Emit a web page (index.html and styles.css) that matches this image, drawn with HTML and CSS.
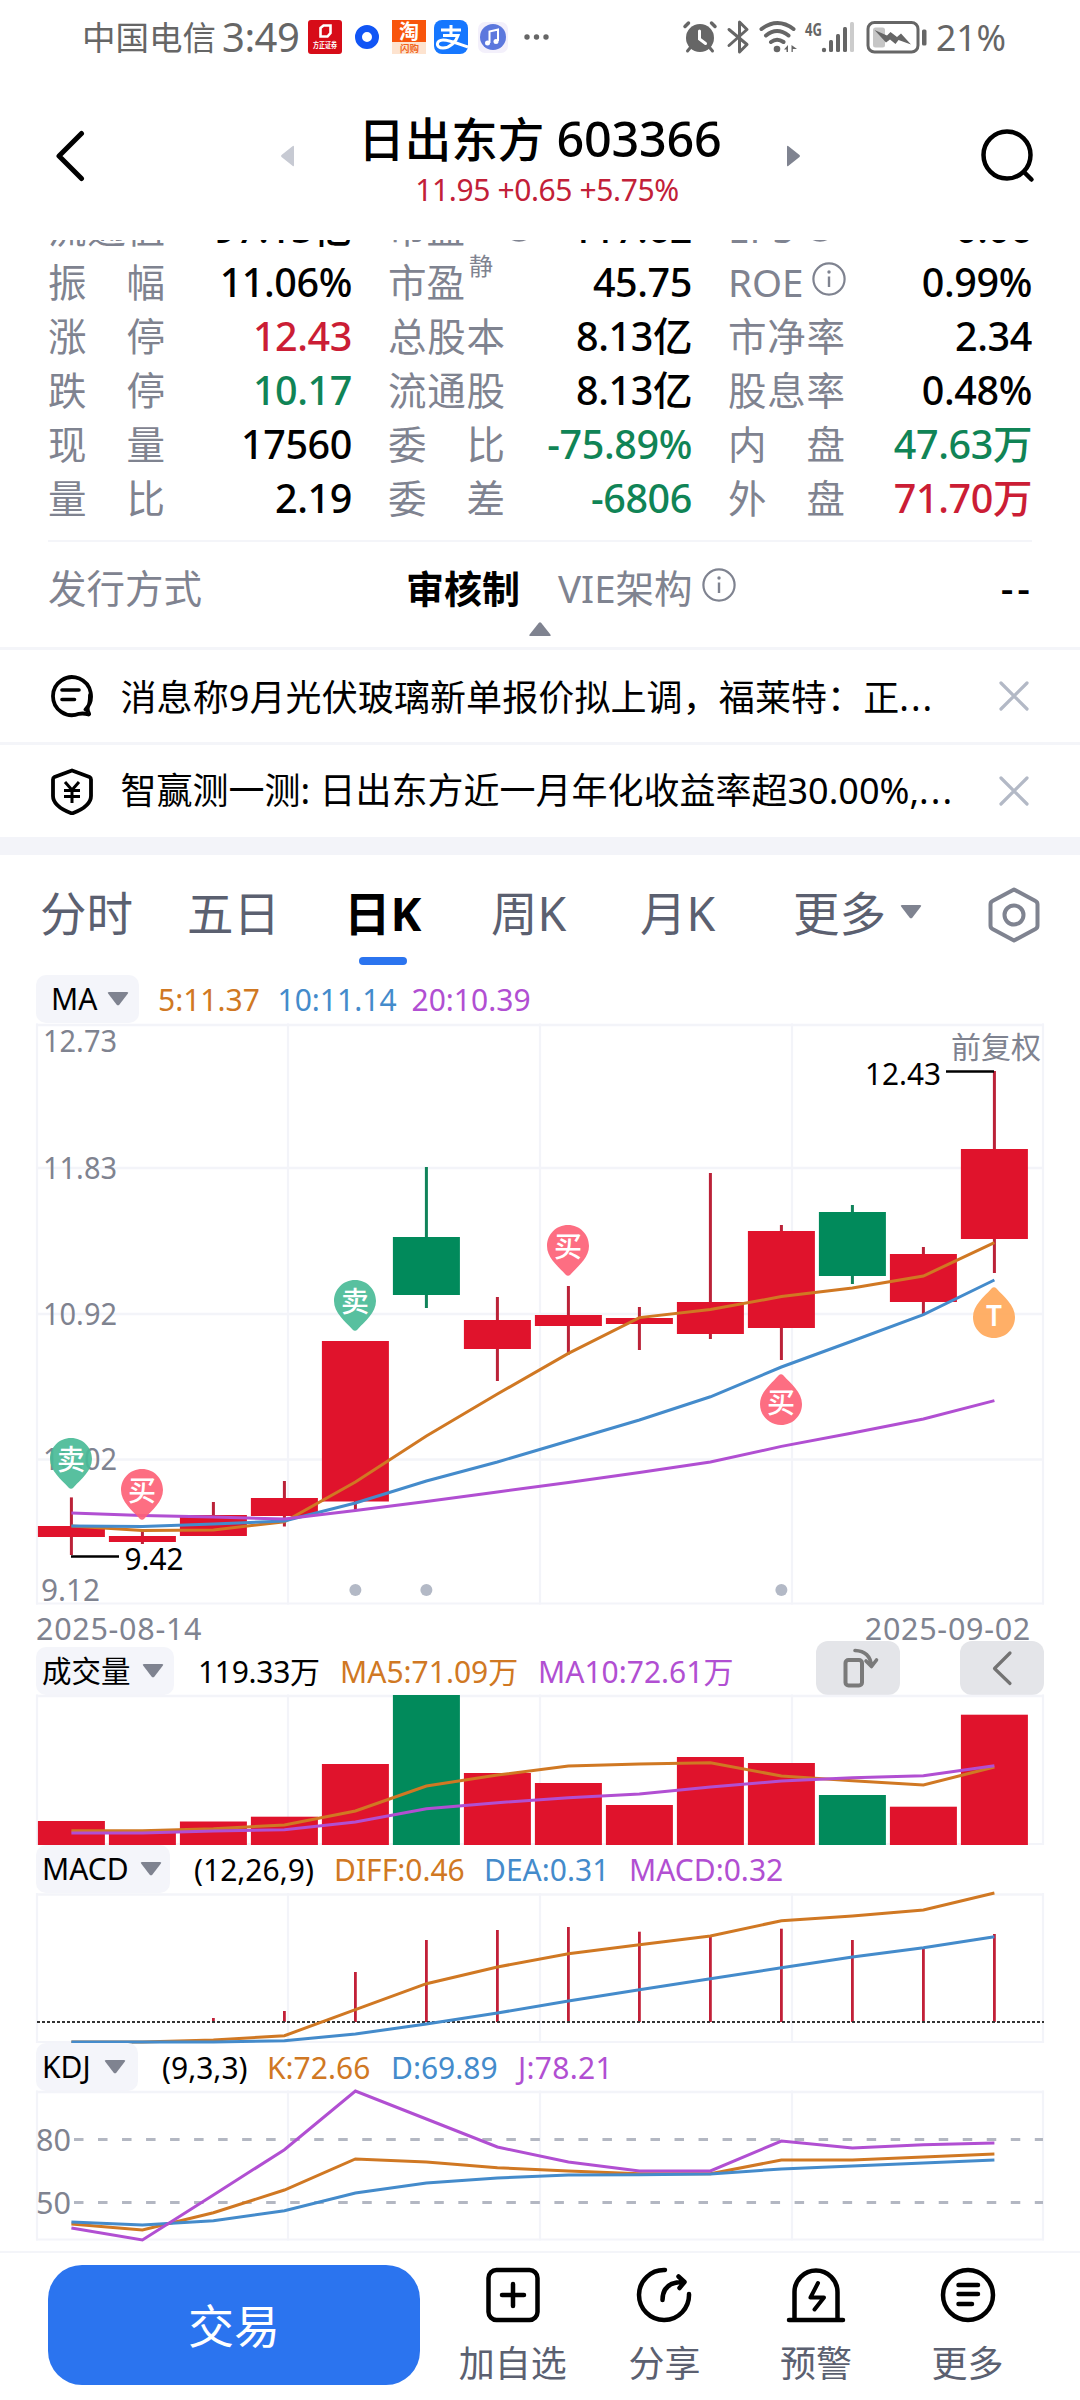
FILE: index.html
```html
<!DOCTYPE html>
<html lang="zh-CN">
<head>
<meta charset="utf-8">
<title>日出东方 603366</title>
<link rel="stylesheet" href="styles.css">
</head>
<body>
<svg width="0" height="0" class="defs">
  <defs>
    <symbol id="info" viewBox="0 0 34 34"><circle cx="17" cy="17" r="15.6" fill="none" stroke="#7f8390" stroke-width="2.2"/><path d="M17 14.500V25" stroke="#7f8390" stroke-width="2.400"/><circle cx="17" cy="10" r="1.700" fill="#7f8390"/></symbol>
    <symbol id="caret" viewBox="0 0 22 16"><path d="M2 1H20Q22 1 20.700 2.800L12.500 13.500Q11 15.200 9.500 13.500L1.300 2.800Q0 1 2 1Z" fill="#7f8390"/></symbol>
    <symbol id="close" viewBox="0 0 30 30"><path d="M2 2L28 28M28 2L2 28" stroke="#b3b9c6" stroke-width="3.200" stroke-linecap="round"/></symbol>
  </defs>
</svg>

<div class="statusbar">
  <span class="carrier">中国电信</span><span class="clock">3:49</span>
  <svg class="apps" width="250" height="36" viewBox="306 18 250 36">
    <rect x="308" y="19" width="34" height="34" rx="3" fill="#d70c18"/>
    <path d="M320.500 27L323.500 24.500H330.500V32L327.500 35.500H320.500Z" fill="none" stroke="#fff" stroke-width="2.600"/>
    <text x="313" y="47" font-size="7.500" font-weight="700" fill="#fff" textLength="24" lengthAdjust="spacingAndGlyphs">方正证券</text>
    <circle cx="367" cy="36" r="8.500" fill="none" stroke="#1155f5" stroke-width="7"/>
    <path d="M370 41l4 3" stroke="#1155f5" stroke-width="3"/>
    <rect x="392" y="19" width="34" height="34" fill="#fde3cf"/>
    <rect x="392" y="19" width="34" height="22" fill="#f8550c"/>
    <text x="399" y="38" font-size="20" font-weight="700" fill="#fff">淘</text>
    <text x="400" y="51" font-size="9.500" font-weight="700" fill="#f0661c" textLength="19">闪购</text>
    <rect x="434" y="19" width="34" height="34" rx="8" fill="#1677ff"/>
    <path d="M441 29H461M451 24V34M443 34.500H458C456 41 450 47 443 47C435 47 436 39 443 39C450 39 459 43 468 46" fill="none" stroke="#fff" stroke-width="3"/>
    <rect x="478" y="21" width="30" height="31" rx="7" fill="#f3f0fb"/>
    <circle cx="493" cy="36" r="13" fill="#5c78dd"/>
    <path d="M489.500 42V30.500L498 28.500V40" fill="none" stroke="#fff" stroke-width="2"/><circle cx="487.500" cy="42" r="2.500" fill="#fff"/><circle cx="496" cy="40.500" r="2.500" fill="#fff"/>
    <g fill="#666"><circle cx="527" cy="36" r="2.700"/><circle cx="536.500" cy="36" r="2.700"/><circle cx="546" cy="36" r="2.700"/></g>
  </svg>
  <svg class="sysicons" width="250" height="40" viewBox="680 16 250 40">
    <g fill="none" stroke="#666" stroke-linecap="round">
      <circle cx="700" cy="37" r="14" fill="#666" stroke="none"/>
      <path d="M685 25.500L688.500 22M715 25.500L711.500 22" stroke-width="3.500"/>
      <path d="M690 47L687.500 50M710 47L712.500 50" stroke-width="3"/>
      <path d="M699.500 30V38L705.500 42.500" stroke="#fff" stroke-width="3"/>
      <path d="M729 28.500L747 43.500L739.500 51V21L747 28.500L729 44.500" stroke-width="3" stroke-linejoin="round"/>
      <path d="M761.500 28Q777.500 16 793.500 28M766 34.500Q777 25.500 788.500 34.500M771 41Q777 36.500 783.500 41" stroke-width="4"/>
    </g>
    <circle cx="777" cy="48" r="3.300" fill="#666"/>
    <path d="M788 44V51H786.500V48.500H784ZM791.500 44L797 48H792.800V51H791.500Z" fill="#666"/>
    <text x="805" y="34.500" font-size="17.500" font-weight="700" fill="#666" textLength="17" lengthAdjust="spacingAndGlyphs">4G</text>
    <g fill="#666"><circle cx="824" cy="49" r="2.200"/><rect x="829" y="39" width="4" height="12" rx="1.500"/><rect x="836" y="33" width="4" height="18" rx="1.500"/><rect x="843" y="26" width="4" height="25" rx="1.500"/><rect x="850" y="21" width="4" height="30" rx="1.500" fill="#ccc"/></g>
    <rect x="868" y="21.500" width="50" height="29.500" rx="6.500" fill="none" stroke="#666" stroke-width="3"/>
    <rect x="873" y="26.500" width="12" height="20" rx="2.500" fill="#c6c6c6"/>
    <path d="M874.500 29L887 34.500L890.500 31L897 36L901 32.500L911 43.500L898.500 39L895.500 43L890 38.500L886 41.500Z" fill="#666"/>
    <rect x="922" y="28.500" width="4.500" height="16" rx="1.500" fill="#666"/>
  </svg>
  <span class="battery">21%</span>
</div>

<header class="header">
  <svg class="back" width="30" height="52" viewBox="0 0 30 52"><path d="M26.500 3.500L4 26L26.500 48.500" fill="none" stroke="#000" stroke-width="5" stroke-linecap="round" stroke-linejoin="round"/></svg>
  <svg class="prev" width="15" height="22" viewBox="0 0 15 22"><path d="M14 2V20Q14 22 12.500 20.700L1.500 12Q.5 11 1.500 10L12.500 1.300Q14 0 14 2Z" fill="#c7cad3"/></svg>
  <div class="title">
    <div class="name">日出东方 <span>603366</span></div>
    <div class="price">11.95 +0.65 +5.75%</div>
  </div>
  <svg class="next" width="15" height="22" viewBox="0 0 15 22"><path d="M1 2V20Q1 22 2.500 20.700L13.500 12Q14.500 11 13.500 10L2.500 1.300Q1 0 1 2Z" fill="#7f8390"/></svg>
  <svg class="search" width="56" height="56" viewBox="0 0 56 56"><circle cx="27" cy="27" r="23.500" fill="none" stroke="#000" stroke-width="4.500"/><path d="M44 44L51.500 51.500" stroke="#000" stroke-width="4.500" stroke-linecap="round"/></svg>
</header>

<section class="quotes">
  <div class="grid">
    <div class="cell"><span class="label j">流通值</span><b>97.15亿</b></div>
    <div class="cell"><span class="label">市盈<sup>动</sup><svg class="info" width="34" height="34"><use href="#info"/></svg></span><b>117.62</b></div>
    <div class="cell"><span class="label">EPS<svg class="info" width="34" height="34"><use href="#info"/></svg></span><b>0.06</b></div>
    <div class="cell"><span class="label j">振 幅</span><b>11.06%</b></div>
    <div class="cell"><span class="label">市盈<sup>静</sup></span><b>45.75</b></div>
    <div class="cell"><span class="label">ROE<svg class="info" width="34" height="34"><use href="#info"/></svg></span><b>0.99%</b></div>
    <div class="cell"><span class="label j">涨 停</span><b class="up">12.43</b></div>
    <div class="cell"><span class="label j">总股本</span><b>8.13亿</b></div>
    <div class="cell"><span class="label j">市净率</span><b>2.34</b></div>
    <div class="cell"><span class="label j">跌 停</span><b class="down">10.17</b></div>
    <div class="cell"><span class="label j">流通股</span><b>8.13亿</b></div>
    <div class="cell"><span class="label j">股息率</span><b>0.48%</b></div>
    <div class="cell"><span class="label j">现 量</span><b>17560</b></div>
    <div class="cell"><span class="label j">委 比</span><b class="down">-75.89%</b></div>
    <div class="cell"><span class="label j">内 盘</span><b class="down">47.63万</b></div>
    <div class="cell"><span class="label j">量 比</span><b>2.19</b></div>
    <div class="cell"><span class="label j">委 差</span><b class="down">-6806</b></div>
    <div class="cell"><span class="label j">外 盘</span><b class="up">71.70万</b></div>
  </div>
</section>
<section class="issue">
  <div class="cell"><span class="label">发行方式</span><b class="heavy">审核制</b></div>
  <div class="cell"><span class="label">VIE架构<svg class="info" width="34" height="34"><use href="#info"/></svg></span><b class="dash">--</b></div>
</section>
<div class="fold"><svg width="24" height="16" viewBox="0 0 24 16"><path d="M2.500 15H21.500Q23.500 15 22.200 13.200L13.300 2Q12 .5 10.700 2L1.800 13.200Q.5 15 2.500 15Z" fill="#7f8390"/></svg></div>

<div class="news">
  <svg width="44" height="46" viewBox="51 672 44 46"><path d="M86.500 708.500A19 19 0 1 0 80 712.800Q85 712 89.500 713.500Q90.500 713.500 90 712.500Q88 709 89 706Q91 702 91 694" fill="none" stroke="#000" stroke-width="3.800" stroke-linejoin="round" stroke-linecap="round"/><path d="M63 689H80M63 698.500H75.500" stroke="#000" stroke-width="3.600" stroke-linecap="round"/></svg>
  <span class="t1">消息称9月光伏玻璃新单报价拟上调，福莱特：正<i>...</i></span>
  <svg class="x" width="30" height="30"><use href="#close"/></svg>
</div>
<div class="news">
  <svg width="44" height="48" viewBox="50 765 44 48"><path d="M72 768.500L89.500 775Q91 775.700 91 777.500V794C91 803 80 808.500 72 811.500C64 808.500 53 803 53 794V777.500Q53 775.700 54.500 775Z" fill="none" stroke="#000" stroke-width="3.800" stroke-linejoin="round"/><path d="M65 780L72 788L79 780M64 788.500H80M64 794.500H80M72 788V801" fill="none" stroke="#000" stroke-width="3"/></svg>
  <span class="t2">智赢测一测: 日出东方近一月年化收益率超30.00%,<i>...</i></span>
  <svg class="x" width="30" height="30"><use href="#close"/></svg>
</div>

<nav class="tabs">
  <span class="tab">分时</span><span class="tab">五日</span><span class="tab on">日K</span><span class="tab">周K</span><span class="tab">月K</span>
  <span class="tab more">更多<svg width="22" height="16"><use href="#caret"/></svg></span>
  <svg class="gear" width="54" height="58" viewBox="987 886 54 58"><path d="M1014 889.500L1035.500 901Q1037.500 902 1037.500 904.500V925.500Q1037.500 928 1035.500 929L1014 940.500L992.500 929Q990.500 928 990.500 925.500V904.500Q990.500 902 992.500 901Z" fill="none" stroke="#7f8390" stroke-width="4" stroke-linejoin="round"/><circle cx="1014" cy="915" r="9.500" fill="none" stroke="#7f8390" stroke-width="4"/></svg>
</nav>

<div class="legend ma">
  <span class="chip">MA<svg width="22" height="16"><use href="#caret"/></svg></span>
  <span class="c5">5:11.37</span><span class="c10">10:11.14</span><span class="c20">20:10.39</span>
</div>
<svg id="kline" class="plot" width="1080" height="584" viewBox="0 1023 1080 584"></svg>
<div class="dates"><span>2025-08-14</span><span>2025-09-02</span></div>

<div class="legend vol">
  <span class="chip">成交量<svg width="22" height="16"><use href="#caret"/></svg></span>
  <span>119.33万</span><span class="c5">MA5:71.09万</span><span class="c20">MA10:72.61万</span>
  <div class="tools">
    <span class="tool"><svg width="84" height="54" viewBox="816 1641 84 54"><rect x="845.500" y="1660" width="16.500" height="25.500" rx="3" fill="none" stroke="#7a7a7a" stroke-width="4"/><path d="M855 1650.500Q870 1651 871.500 1666M866 1661L871.500 1666.500L876.500 1660" fill="none" stroke="#7a7a7a" stroke-width="3.600" stroke-linecap="round" stroke-linejoin="round"/></svg></span>
    <span class="tool"><svg width="84" height="54" viewBox="960 1641 84 54"><path d="M1010 1653L994.500 1668.500L1010 1683.500" fill="none" stroke="#737373" stroke-width="3.200" stroke-linecap="round" stroke-linejoin="round"/></svg></span>
  </div>
</div>
<svg id="volume" class="plot" width="1080" height="150" viewBox="0 1695 1080 150"></svg>

<div class="legend macd">
  <span class="chip">MACD<svg width="22" height="16"><use href="#caret"/></svg></span>
  <span>(12,26,9)</span><span class="c5">DIFF:0.46</span><span class="c10">DEA:0.31</span><span class="c20">MACD:0.32</span>
</div>
<svg id="macd" class="plot" width="1080" height="150" viewBox="0 1893 1080 150"></svg>

<div class="legend kdj">
  <span class="chip">KDJ<svg width="22" height="16"><use href="#caret"/></svg></span>
  <span>(9,3,3)</span><span class="c5">K:72.66</span><span class="c10">D:69.89</span><span class="c20">J:78.21</span>
</div>
<svg id="kdj" class="plot" width="1080" height="150" viewBox="0 2091 1080 150"></svg>

<footer class="bottom">
  <div class="trade">交易</div>
  <div class="act"><svg width="60" height="60" viewBox="0 0 60 60"><rect x="5.500" y="5" width="49" height="50" rx="8" fill="none" stroke="#000" stroke-width="4.500"/><path d="M30 19V41M19 30H41" stroke="#000" stroke-width="4.500" stroke-linecap="round"/></svg>加自选</div>
  <div class="act"><svg width="60" height="60" viewBox="0 0 60 60"><path d="M31 5A25 25 0 1 0 55 29M28.500 35Q28.500 17 49 17M44.500 11.500L50.500 17L45.500 23" fill="none" stroke="#000" stroke-width="4.500" stroke-linecap="round" stroke-linejoin="round"/></svg>分享</div>
  <div class="act"><svg width="60" height="60" viewBox="0 0 60 60"><path d="M8.500 54V27A21.500 21.500 0 0 1 51.500 27V54M3 55H57" fill="none" stroke="#000" stroke-width="4.500" stroke-linecap="round"/><path d="M32 18L24.500 32.500H38L28.500 44.500" fill="none" stroke="#000" stroke-width="4" stroke-linecap="round" stroke-linejoin="round"/></svg>预警</div>
  <div class="act"><svg width="60" height="60" viewBox="0 0 60 60"><circle cx="30" cy="30" r="25" fill="none" stroke="#000" stroke-width="4.500"/><path d="M20.500 20H40M20.500 29H40M20.500 39H34" stroke="#000" stroke-width="4.500" stroke-linecap="round"/></svg>更多</div>
</footer>
<script src="charts.js"></script>
</body>
</html>
```
FILE: styles.css
```css
* { box-sizing: border-box; }
body {
  margin: 0; width: 1080px; height: 2400px; overflow: hidden; background: #fff; color: #000;
  font-family: "Noto Sans", "Noto Sans CJK SC", sans-serif;
}
svg { display: block; flex: none; }
.defs { position: absolute; }
i { font-style: normal; letter-spacing: 2px; }

.statusbar { height: 70px; display: flex; align-items: center; padding: 4px 0 0 82px; color: #666; white-space: nowrap; }
.statusbar span { line-height: 60px; }
.carrier { font-size: 33.5px; width: 140px; }
.clock { font-size: 40px; width: 84px; letter-spacing: -0.5px; }
.apps { width: 250px; }
.sysicons { margin-left: 124px; }
.battery { font-size: 35.5px; margin-left: 6px; }

.header { height: 170px; display: flex; align-items: flex-start; padding-left: 55px; }
.back { margin-top: 60px; }
.prev { margin: 75px 0 0 195px; }
.title { width: 490px; text-align: center; padding-top: 40px; white-space: nowrap; }
.name { font-size: 46.5px; font-weight: 500; line-height: 56px; height: 56px; }
.name span { font-size: 48.5px; letter-spacing: -0.2px; }
.price { font-size: 30px; line-height: 40px; margin-top: 4px; color: #c22038; padding-left: 14px; letter-spacing: -0.4px; }
.next { margin: 75px 0 0 1px; }
.search { margin: 58px 0 0 179px; }

.quotes { margin: 0 48px; height: 302px; overflow: hidden; border-bottom: 2px solid #f4f5f9; }
.grid { display: grid; grid-template-columns: repeat(3, 304px); column-gap: 36px; grid-auto-rows: 54px; margin-top: -39px; }
.cell { display: flex; justify-content: space-between; align-items: center; line-height: 54px; font-size: 38.5px; white-space: nowrap; }
.cell b { font-weight: 500; font-size: 39.5px; letter-spacing: -0.4px; }
.cell b.heavy { font-weight: 700; font-size: 38px; letter-spacing: 0; }
.cell b.dash { letter-spacing: 4px; margin-right: -2px; }
.label { color: #7f8390; display: flex; align-items: center; height: 54px; }
.label.j { width: 117px; display: block; text-align: justify; text-align-last: justify; }
.label sup { font-size: 24px; line-height: 24px; align-self: flex-start; margin: -1px 0 0 4px; }
.info { margin: -6px 0 0 9px; }
.cell b.up, .up { color: #cb1d35; }
.cell b.down, .down { color: #108456; }
.issue { height: 76px; padding: 16px 48px 0; display: grid; grid-template-columns: 472px 474px; column-gap: 38px; }
.fold { height: 32px; padding-top: 3px; border-bottom: 3px solid #f4f5f9; display: flex; justify-content: center; }

.news { height: 94.5px; display: flex; align-items: center; padding: 0 50px; border-bottom: 3px solid #f4f5f9; font-size: 36px; white-space: nowrap; }
.news span { margin: 5px 0 0 26.5px; line-height: 50px; width: 878.5px; }
.news .t1 { letter-spacing: 0.1px; }
.news .t2 { margin-top: 0; }
.news + .news { border-bottom: 18px solid #f3f4f9; height: 110.500px; }

.tabs { height: 120px; display: grid; grid-template-columns: 147px 157px 147px 149px 153px 194px 54px; justify-items: start; font-size: 46.5px; line-height: 60px; color: #5b6070; padding: 28px 0 0 40px; white-space: nowrap; }
.tab { height: 82px; }
.tab.on { color: #000; font-weight: 700; display: flex; flex-direction: column; align-items: center; }
.tab.on::after { content: ""; width: 48px; height: 9px; border-radius: 5px; background: #2b74ef; margin-top: 14px; }
.tab.more { display: flex; }
.tab.more svg { margin: 21px 0 0 14px; }
.gear { margin-top: 3px; }

.legend { height: 48px; display: flex; align-items: center; padding-left: 36px; font-size: 30px; line-height: 50px; white-space: nowrap; }
.chip { display: flex; align-items: center; background: #f4f5fa; border-radius: 10px; height: 48px; padding-left: 6px; }
.chip svg { margin-left: 11px; margin-top: -1px; }
.legend > span { flex: none; }
.legend > span:not(.chip) { padding-top: 2px; }
.ma .chip { width: 103px; padding-left: 15px; margin-right: 19px; }
.ma .chip svg { margin-left: 10px; }
.ma .c5 { width: 119.5px; } .ma .c10 { width: 134px; }
.vol .chip { width: 138px; margin-right: 24px; font-size: 29.5px; }
.vol > span:nth-child(2) { width: 142px; letter-spacing: -0.3px; } .vol .c5 { width: 198px; }
.macd .chip { width: 134px; margin-right: 24px; }
.macd > span:nth-child(2) { width: 140px; } .macd .c5 { width: 150px; } .macd .c10 { width: 145px; }
.kdj .chip { width: 102px; margin-right: 24px; }
.kdj .chip svg { margin-left: 13px; }
.kdj > span:nth-child(2) { width: 105px; } .kdj .c5 { width: 124px; } .kdj .c10 { width: 127px; } .kdj .c20 { letter-spacing: 0.3px; }
.c5 { color: #d07823; } .c10 { color: #448bcb; } .c20 { color: #b14fd2; }
.tools { display: flex; gap: 60px; margin: -6px 36px 0 auto; }
.tool { background: #e4e5e9; border-radius: 12px; width: 84px; height: 54px; }
.dates { height: 40px; padding: 0 49px 0 36px; display: flex; justify-content: space-between; line-height: 42px; font-size: 30.5px; letter-spacing: 0.7px; color: #7f8390; }
.plot { overflow: visible; font-size: 30px; }

.bottom { margin-top: 10px; height: 149px; border-top: 2px solid #f4f5f9; padding: 12px 0 0 48px; display: flex; }
.trade { width: 372px; height: 120px; border-radius: 34px; background: #2b74ef; color: #fff; font-size: 46px; line-height: 120px; text-align: center; margin-right: 17px; }
.act { width: 151.600px; display: flex; flex-direction: column; align-items: center; font-size: 36px; line-height: 50px; color: #5b6070; white-space: nowrap; }
.act svg { margin-bottom: 14px; }
```
FILE: charts.js
```js
const NS = 'http://www.w3.org/2000/svg';
const RED = '#e0132c', GREEN = '#018a5b', GRID = '#f3f4f9';
const ORANGE_LINE = '#d07823', BLUE_LINE = '#448bcb', PURPLE_LINE = '#b14fd2';
const X = Array.from({ length: 14 }, (_, i) => 71.400 + i * 71);

function add(svg, tag, attrs, text) {
  const el = document.createElementNS(NS, tag);
  for (const k in attrs) el.setAttribute(k, attrs[k]);
  if (text) el.textContent = text;
  svg.appendChild(el);
  return el;
}
const rect = (s, x, y, w, h, fill) => add(s, 'rect', { x, y, width: w, height: h, fill });
const seg = (s, x1, y1, x2, y2, stroke, w, more) => add(s, 'line', { x1, y1, x2, y2, stroke, 'stroke-width': w, ...more });
const label = (s, x, y, w, text, fill) => add(s, 'text', { x, y, fill, textLength: w, lengthAdjust: 'spacingAndGlyphs' }, text);
const curve = (s, ys, stroke) => add(s, 'polyline', {
  points: ys.map((y, i) => X[i] + ',' + y).join(' '), fill: 'none', stroke, 'stroke-width': 3
});
function frame(s, top, bottom) {
  [37, 288, 540, 792, 1043].forEach(x => seg(s, x, top, x, bottom, GRID, 2.200));
  seg(s, 36, top + 1.500, 1044, top + 1.500, GRID, 2.600);
  seg(s, 36, bottom - 1, 1044, bottom - 1, GRID, 2.200);
}

/* Candles: [body top, body bottom, wick top, wick bottom, falling?] */
const candles = [
  [1526, 1537, 1497.400, 1555], [1536, 1542, 1530, 1544], [1515, 1536, 1502, 1536], [1498, 1516, 1481, 1526.500],
  [1341, 1501.500, 1341, 1510], [1237, 1295, 1167, 1308, 1], [1320, 1349, 1297, 1381], [1315, 1326, 1286, 1354.500],
  [1318, 1324, 1307, 1350], [1302, 1334, 1173, 1339], [1231, 1328, 1225, 1360], [1212, 1276, 1205, 1284, 1],
  [1254, 1302, 1247, 1314], [1149, 1239, 1071, 1273]
];
const k = document.getElementById('kline');
frame(k, 1023.500, 1604.500);
[1168, 1314, 1459.500].forEach(y => seg(k, 37, y, 1043, y, GRID, 2.500));
[[43, 1052, 74, '12.73'], [43, 1179, 74, '11.83'], [43, 1325, 74, '10.92'], [43, 1470, 74, '10.02'], [41, 1601, 59, '9.12']]
  .forEach(([x, y, w, t]) => label(k, x, y, w, t, '#7f8390'));
candles.forEach(([a, b, c, d, fall], i) => {
  rect(k, X[i] - 1.500, c, 3, d - c, fall ? '#10835a' : '#bb2238');
  rect(k, X[i] - 33.500, a, 67, b - a, fall ? GREEN : RED);
});
curve(k, [1526, 1530.600, 1530, 1521.800, 1482, 1436, 1394, 1353.400, 1317.600, 1309.600, 1296.600, 1288, 1276, 1242.700], ORANGE_LINE);
curve(k, [1526, 1526.400, 1524, 1521, 1503, 1481, 1462, 1441, 1420, 1396.800, 1367, 1341, 1314.700, 1280], BLUE_LINE);
curve(k, [1513, 1515.500, 1517, 1519, 1510.400, 1501.600, 1492, 1482.600, 1472.500, 1462, 1446.400, 1433, 1419, 1400.600], PURPLE_LINE);

/* Trade pins; a flipped pin points up at the candle above it. */
function pin(i, top, fill, text, flip) {
  const g = add(k, 'g', { transform: `translate(${X[i] - 0.400} ${top})` });
  add(g, 'path', {
    d: 'M0 0C12 0 21 9.500 21 21C21 33 10 41 2.500 49.500Q0 52 -2.500 49.500C-10 41 -21 33 -21 21C-21 9.500 -12 0 0 0Z',
    fill, opacity: 0.920, ...(flip ? { transform: 'translate(0 51) scale(1 -1)' } : {})
  });
  add(g, 'text', { x: 0, y: flip ? 38.500 : 32, 'font-size': 28, 'font-weight': text === 'T' ? 600 : 500, fill: '#fff', 'text-anchor': 'middle' }, text);
}
pin(0, 1438, '#4abb97', '卖');
pin(1, 1469, '#fd6277', '买');
pin(4, 1280, '#4abb97', '卖');
pin(7, 1225, '#fd6277', '买');
pin(10, 1374, '#fd6277', '买', true);
pin(13, 1287, '#ffa85a', 'T', true);
[4, 5, 10].forEach(i => add(k, 'circle', { cx: X[i], cy: 1590, r: 6, fill: '#b3b9c6' }));
seg(k, 71, 1556.500, 119, 1556.500, '#000', 2.600);
label(k, 124.500, 1570, 59, '9.42', '#000');
seg(k, 946, 1071.500, 994, 1071.500, '#000', 2.600);
label(k, 865, 1085, 76, '12.43', '#000');
label(k, 951, 1058, 90, '前复权', '#7f8390');

const v = document.getElementById('volume');
frame(v, 1694.500, 1845);
[1821, 1832, 1821.500, 1816.700, 1764, 1695, 1773, 1783, 1805, 1757, 1763, 1795, 1806.700, 1714.700]
  .forEach((y, i) => rect(v, X[i] - 33.500, y, 67, 1845 - y, i === 5 || i === 11 ? GREEN : RED));
curve(v, [1830.700, 1830.700, 1828.700, 1825, 1811, 1786, 1775, 1766, 1764, 1762.700, 1776, 1780.700, 1785, 1767], ORANGE_LINE);
curve(v, [1833, 1833, 1831, 1829.700, 1822, 1808.700, 1802.700, 1797.700, 1794, 1787, 1781, 1777.700, 1775.700, 1765.700], PURPLE_LINE);

const m = document.getElementById('macd');
frame(m, 1893, 2043);
[0, 0, 2018, 2011, 1972, 1940, 1930, 1927, 1931.700, 1936.700, 1928.700, 1940, 1948, 1934]
  .forEach((y, i) => y && seg(m, X[i], y, X[i], 2022, '#c22038', 2.800));
seg(m, 37, 2022, 1044, 2022, '#333', 2, { 'stroke-dasharray': '3 2' });
curve(m, [2042, 2042, 2040, 2035.700, 2009.700, 1983.700, 1967, 1953.700, 1944.700, 1936, 1920.700, 1916, 1910, 1893], ORANGE_LINE);
curve(m, [2042, 2042, 2042, 2040.700, 2034, 2024, 2013, 2001, 1989.700, 1978.700, 1967.700, 1957, 1947.700, 1936.700], BLUE_LINE);

const j = document.getElementById('kdj');
frame(j, 2090.500, 2240.500);
[[2139.500, '80'], [2202.500, '50']].forEach(([y, t]) => {
  seg(j, 74, y, 1043, y, '#b3b7c2', 3, { 'stroke-dasharray': '9.500 14.520' });
  label(j, 36, y + 11, 35, t, '#7f8390');
});
curve(j, [2224, 2230, 2212.700, 2190, 2159, 2162, 2167.700, 2171, 2173.700, 2173.700, 2160, 2160, 2157, 2154], ORANGE_LINE);
curve(j, [2222, 2225, 2220.700, 2210.700, 2193, 2183, 2178, 2175, 2174.700, 2174, 2169, 2166, 2163, 2160], BLUE_LINE);
curve(j, [2228, 2240, 2195, 2149.700, 2091, 2119, 2147, 2162, 2171, 2171, 2141, 2148, 2144.700, 2143], PURPLE_LINE);
```
